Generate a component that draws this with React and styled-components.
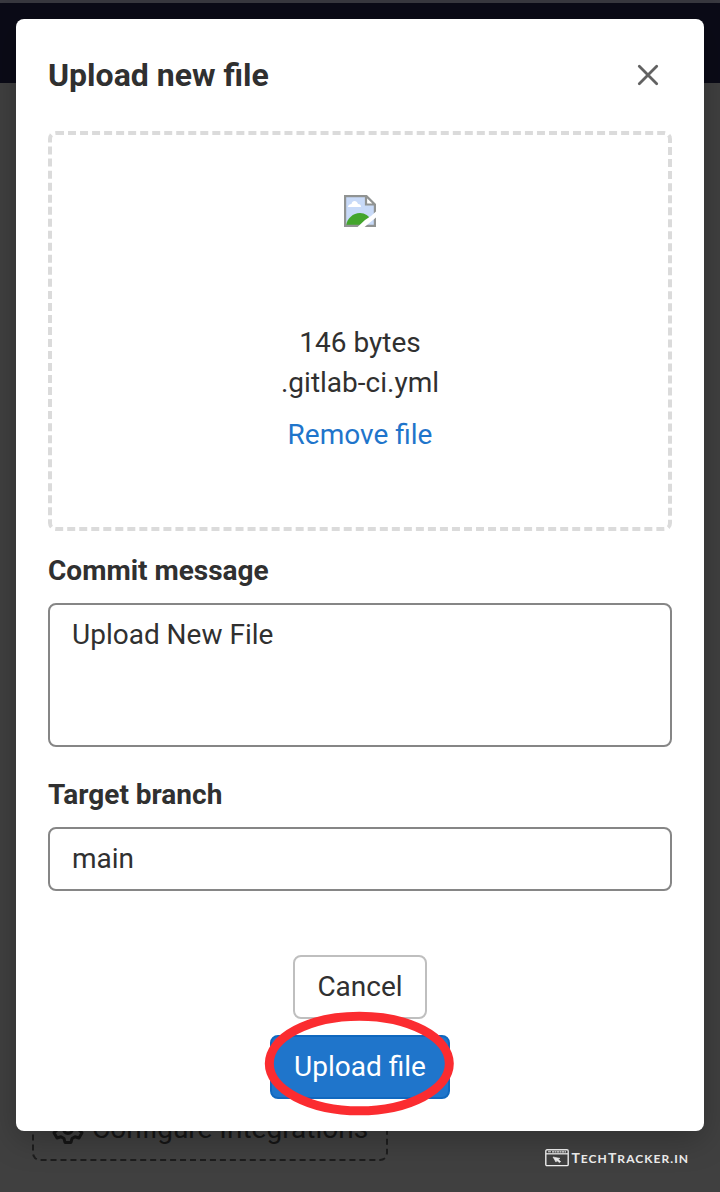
import React from "react";
import styled, { createGlobalStyle } from "styled-components";

const GlobalStyle = createGlobalStyle`
  *, *::before, *::after { box-sizing: border-box; }
  html, body { margin: 0; padding: 0; }
  body {
    background: #3f3f3f;
    font-family: Roboto, "Liberation Sans", sans-serif;
    font-size: 28px;
    line-height: 40px;
    color: #303030;
  }
`;

const Screen = styled.div`
  position: relative;
  height: 1192px;
  overflow: hidden;
`;

const Page = styled.div`
  display: flex;
  flex-direction: column;
  height: 100%;
  background: #404040;
`;

const StatusStrip = styled.div`
  height: 3px;
  background: #38383f;
`;

const NavBar = styled.div`
  height: 80px;
  background: #0b0b17;
`;

const PageFooter = styled.div`
  display: flex;
  justify-content: space-between;
  align-items: flex-end;
  margin-top: auto;
  padding: 0 32px 23px 32px;
`;

const IntegrationsButton = styled.div`
  display: flex;
  align-items: center;
  gap: 8px;
  width: 356px;
  height: 68px;
  padding: 4px 0 0 18px;
  margin-bottom: 8px;
  border: 2px dashed #1d1d1d;
  border-radius: 8px;
  color: #161616;
  white-space: nowrap;
`;

const Watermark = styled.div`
  display: flex;
  align-items: center;
  gap: 2px;
  color: #f0f0f0;
`;

const Brand = styled.span`
  font-family: Lato, "Open Sans", sans-serif;
  font-size: 12px;
  font-weight: 700;
  line-height: 20px;
  letter-spacing: 1.05px;
  margin-right: -1.05px;
  padding-top: 2px;
  text-transform: uppercase;
  white-space: nowrap;
`;

const Initial = styled.span`
  font-size: 14px;
`;

const Dialog = styled.section`
  position: absolute;
  top: 19px;
  left: 16px;
  right: 16px;
  display: flex;
  flex-direction: column;
  height: 1112px;
  padding: 32px;
  border-radius: 8px;
  background: #fff;
  box-shadow: 0 8px 32px rgba(0, 0, 0, 0.25);
`;

const DialogHeader = styled.header`
  display: flex;
  justify-content: space-between;
  align-items: center;
  height: 48px;
  margin-bottom: 32px;
  padding-right: 12px;
`;

const Title = styled.h2`
  margin: 0;
  font-size: 32px;
  line-height: 40px;
  font-weight: 700;
`;

const CloseButton = styled.button`
  display: flex;
  padding: 0;
  border: 0;
  background: none;
  color: #626262;
`;

const DropZone = styled.div`
  display: flex;
  flex-direction: column;
  align-items: center;
  height: 400px;
  padding-top: 60px;
  border: 4px dashed #dbdbdb;
  border-radius: 8px;
`;

const Preview = styled.div`
  display: flex;
  height: 128px;
`;

const FileLine = styled.div`
  height: 40px;
`;

const RemoveLink = styled.a`
  margin-top: 12px;
  color: #1f75cb;
`;

const Label = styled.label`
  margin: ${(p) => p.$top}px 0 12px;
  font-weight: 700;
`;

const Field = styled.div`
  height: ${(p) => p.$height}px;
  padding: 10px 22px;
  border: 2px solid #868686;
  border-radius: 8px;
`;

const Actions = styled.footer`
  display: flex;
  flex-direction: column;
  align-items: center;
  gap: 16px;
  margin-top: 64px;
`;

const Button = styled.button`
  width: ${(p) => (p.$primary ? 180 : 134)}px;
  height: 64px;
  padding: 0;
  border: 2px solid ${(p) => (p.$primary ? "#1068bf" : "#bfbfbf")};
  border-radius: 8px;
  background: ${(p) => (p.$primary ? "#1f75cb" : "#fff")};
  color: ${(p) => (p.$primary ? "#fff" : "#303030")};
  font: inherit;
`;

const Highlight = styled.svg`
  position: absolute;
  left: 248px;
  top: 992px;
`;

const CloseIcon = () => (
  <svg width="24" height="24" viewBox="0 0 24 24" fill="none" stroke="currentColor" strokeWidth="2.8" strokeLinecap="round">
    <path d="M3.3 3.3 20.7 20.7M20.7 3.3 3.3 20.7" />
  </svg>
);

const BrokenImage = () => (
  <svg width="32" height="32" viewBox="0 0 32 32">
    <path d="M1 1H22L31 10V31H1Z" fill="#c8daf8" />
    <path d="M4 12c0-2 2-3 3.5-3C8 5 13 5 14 9c2 0 3 1 3 3Z" fill="#fff" />
    <path d="M2 30.5c1-7 7-12.5 14-12.5 5 0 9 3 11 7l-7 5.5Z" fill="#43a52c" />
    <path d="M22 0H32V9H22Z" fill="#fff" />
    <path d="M1.1 1.1H22.5L30.9 9.5V30.9H1.1Z M22 1V9.5H31" fill="none" stroke="#909392" strokeWidth="2.2" />
    <path d="M13 32.5 21 25 27 21 32.5 16V22L20 32.5Z" fill="#fff" />
  </svg>
);

const GearIcon = () => (
  <svg width="32" height="32" viewBox="0 0 32 32" fill="none" stroke="currentColor" strokeWidth="3" strokeLinejoin="round">
    <path d="M13 2.5h6l1 4 3 1.7 4-1.2 3 5.2-3 2.8v2l3 2.8-3 5.2-4-1.2-3 1.7-1 4h-6l-1-4-3-1.7L5 25 2 19.8 5 17v-2l-3-2.8L5 7l4 1.2 3-1.7Z" />
    <circle cx="16" cy="16" r="4.5" />
  </svg>
);

const BrowserLogo = () => (
  <svg width="24" height="18" viewBox="0 0 24 18" fill="none" stroke="currentColor">
    <rect x="0.8" y="0.8" width="22.4" height="15.8" rx="1.2" strokeWidth="1.4" />
    <path d="M1 4.8H23" strokeWidth="1.3" />
    <path d="M3 2.8H6" strokeWidth="1" />
    <path d="M7 2.8H21" strokeWidth="1.3" strokeDasharray="2 .5" />
    <path d="m8 8 7 1.4-1.8 1.2 2.5 2-1.2 1-2.7-2-.8 1.5Z" fill="currentColor" strokeWidth=".6" />
  </svg>
);

export default function App() {
  return (
    <Screen>
      <GlobalStyle />
      <Page>
        <StatusStrip />
        <NavBar />
        <PageFooter>
          <IntegrationsButton>
            <GearIcon />
            <span>Configure Integrations</span>
          </IntegrationsButton>
          <Watermark>
            <BrowserLogo />
            <Brand>
              <Initial>T</Initial>ech<Initial>T</Initial>racker.in
            </Brand>
          </Watermark>
        </PageFooter>
      </Page>
      <Dialog role="dialog">
        <DialogHeader>
          <Title>Upload new file</Title>
          <CloseButton aria-label="Close">
            <CloseIcon />
          </CloseButton>
        </DialogHeader>
        <DropZone>
          <Preview>
            <BrokenImage />
          </Preview>
          <FileLine>146 bytes</FileLine>
          <FileLine>.gitlab-ci.yml</FileLine>
          <RemoveLink>Remove file</RemoveLink>
        </DropZone>
        <Label $top={20}>Commit message</Label>
        <Field $height={144}>Upload New File</Field>
        <Label $top={28}>Target branch</Label>
        <Field $height={64}>main</Field>
        <Actions>
          <Button>Cancel</Button>
          <Button $primary>Upload file</Button>
        </Actions>
      </Dialog>
      <Highlight width="224" height="144" viewBox="248 992 224 144" fill="none">
        <ellipse cx="359.3" cy="1063.5" rx="90" ry="47.3" stroke="#fb2c30" strokeWidth="9" />
      </Highlight>
    </Screen>
  );
}
